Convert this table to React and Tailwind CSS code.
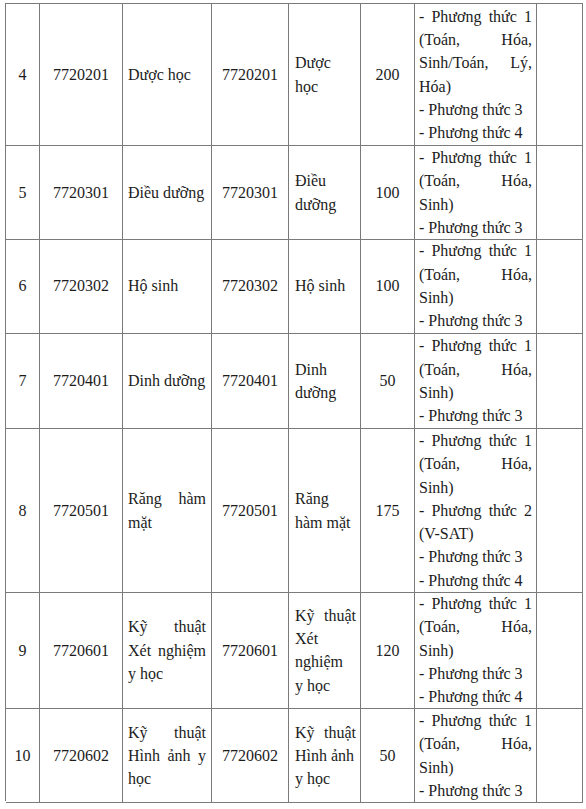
import React from 'react';

// each line: [text, justify?]
const rows = [
  {
    stt: '4', code: '7720201', name: [['Dược học']], code2: '7720201',
    name2: [['Dược'], ['học']], quota: '200', h: 'h-[142px]',
    methods: [['- Phương thức 1', 1], ['(Toán, Hóa,', 1], ['Sinh/Toán, Lý,', 1], ['Hóa)'], ['- Phương thức 3'], ['- Phương thức 4']],
  },
  {
    stt: '5', code: '7720301', name: [['Điều dưỡng']], code2: '7720301',
    name2: [['Điều'], ['dưỡng']], quota: '100', h: 'h-[93px]',
    methods: [['- Phương thức 1', 1], ['(Toán, Hóa,', 1], ['Sinh)'], ['- Phương thức 3']],
  },
  {
    stt: '6', code: '7720302', name: [['Hộ sinh']], code2: '7720302',
    name2: [['Hộ sinh']], quota: '100', h: 'h-[95px]',
    methods: [['- Phương thức 1', 1], ['(Toán, Hóa,', 1], ['Sinh)'], ['- Phương thức 3']],
  },
  {
    stt: '7', code: '7720401', name: [['Dinh dưỡng']], code2: '7720401',
    name2: [['Dinh'], ['dưỡng']], quota: '50', h: 'h-[95px]',
    methods: [['- Phương thức 1', 1], ['(Toán, Hóa,', 1], ['Sinh)'], ['- Phương thức 3']],
  },
  {
    stt: '8', code: '7720501', name: [['Răng hàm', 1], ['mặt']], code2: '7720501',
    name2: [['Răng'], ['hàm mặt']], quota: '175', h: 'h-[163px]',
    methods: [['- Phương thức 1', 1], ['(Toán, Hóa,', 1], ['Sinh)'], ['- Phương thức 2', 1], ['(V-SAT)'], ['- Phương thức 3'], ['- Phương thức 4']],
  },
  {
    stt: '9', code: '7720601', name: [['Kỹ thuật', 1], ['Xét nghiệm', 1], ['y học']], code2: '7720601',
    name2: [['Kỹ thuật', 1], ['Xét'], ['nghiệm'], ['y học']], quota: '120', h: 'h-[117px]',
    methods: [['- Phương thức 1', 1], ['(Toán, Hóa,', 1], ['Sinh)'], ['- Phương thức 3'], ['- Phương thức 4']],
  },
  {
    stt: '10', code: '7720602', name: [['Kỹ thuật', 1], ['Hình ảnh y', 1], ['học']], code2: '7720602',
    name2: [['Kỹ thuật', 1], ['Hình ảnh'], ['y học']], quota: '50', h: 'h-[92px]',
    methods: [['- Phương thức 1', 1], ['(Toán, Hóa,', 1], ['Sinh)'], ['- Phương thức 3']],
  },
];

function Lines({ lines }) {
  return (
    <div className="w-full">
      {lines.map(([t, j], i) => (
        <div key={i} className={j ? 'text-justify [text-align-last:justify]' : 'text-left'}>
          {t}
        </div>
      ))}
    </div>
  );
}

const cell = 'flex items-center border-r border-b border-[#7a7a7a]';
const center = `${cell} justify-center`;

export default function App() {
  return (
    <div className="min-h-[809px] bg-white pl-[5px] pt-[3px] font-['Liberation_Serif'] text-[16px] leading-[23.3px] text-[#1c1c1c]">
      <div className="w-[578px] border-l border-t border-[#7a7a7a]">
        {rows.map((r) => (
          <div
            key={r.stt}
            className={`grid grid-cols-[34px_83px_89px_77px_72px_54px_122px_46px] ${r.h}`}
          >
            <div className={center}>{r.stt}</div>
            <div className={center}>{r.code}</div>
            <div className={`${cell} px-[5px]`}><Lines lines={r.name} /></div>
            <div className={center}>{r.code2}</div>
            <div className={`${cell} pl-[6px] pr-[4px]`}><Lines lines={r.name2} /></div>
            <div className={center}>{r.quota}</div>
            <div className={`${cell} pl-[4px] pr-[4px]`}><Lines lines={r.methods} /></div>
            <div className={cell}></div>
          </div>
        ))}
      </div>
    </div>
  );
}
